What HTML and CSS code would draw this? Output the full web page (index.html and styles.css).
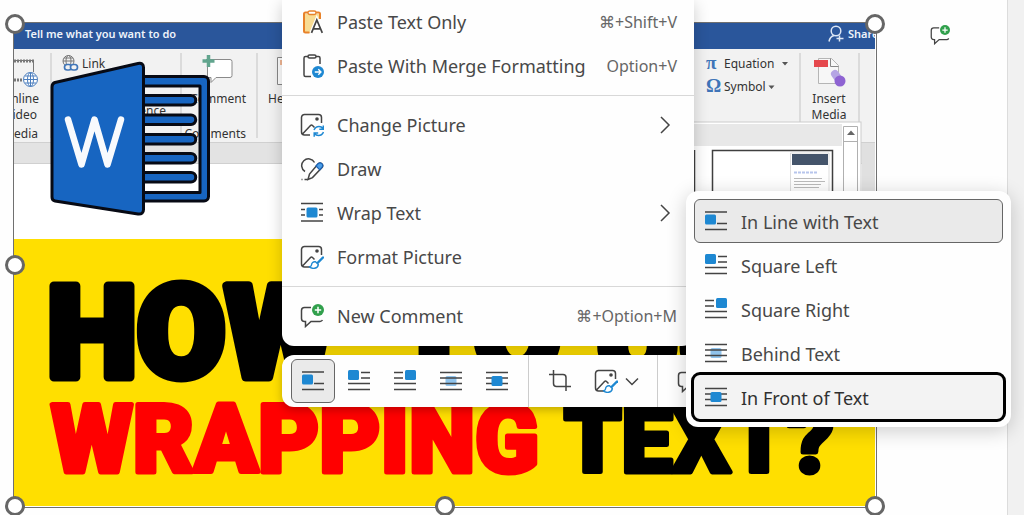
FILE: index.html
```html
<!DOCTYPE html>
<html lang="en">
<head>
<meta charset="utf-8">
<title>Document</title>
<link rel="stylesheet" href="styles.css">
</head>
<body>
<svg class="defs" aria-hidden="true">
  <symbol id="i-inline" viewBox="0 0 24 24"><path class="ln" d="M1 3h22M13 14.5h10M1 20.5h22"/><rect class="sq" x="1" y="5.5" width="11" height="10" rx="1.5"/></symbol>
  <symbol id="i-left" viewBox="0 0 24 24"><path class="ln" d="M14 3.5h9M14 9h9M1 14.5h22M1 20.5h22"/><rect class="sq" x="1" y="1" width="11" height="10" rx="1.5"/></symbol>
  <symbol id="i-right" viewBox="0 0 24 24"><path class="ln" d="M1 3.5h9M1 9h9M1 14.5h22M1 20.5h22"/><rect class="sq" x="12" y="1" width="11" height="10" rx="1.5"/></symbol>
  <symbol id="i-behind" viewBox="0 0 24 24"><rect class="sq pale" x="6.500" y="7" width="11" height="10" rx="1.5"/><path class="ln" d="M1 3.5h22M1 9h22M1 14.5h22M1 20.500h22"/></symbol>
  <symbol id="i-front" viewBox="0 0 24 24"><path class="ln" d="M1 3.5h22M1 9h22M1 14.5h22M1 20.500h22"/><rect class="sq" x="6.500" y="7" width="11" height="10" rx="1.5"/></symbol>
  <symbol id="i-wrap" viewBox="0 0 24 24"><path class="ln" d="M1 2.500h22M1 8.500h4M19 8.500h4M1 14h4M19 14h4M1 20h22"/><rect class="sq" x="6.500" y="6.500" width="11" height="10" rx="1.5"/></symbol>
  <symbol id="i-chev" viewBox="0 0 12 18"><path class="ln" d="M2 1l8 8-8 8"/></symbol>
  <symbol id="i-down" viewBox="0 0 14 9"><path class="ln" d="M1 1.500l6 6 6-6"/></symbol>
  <symbol id="i-comment" viewBox="0 0 24 24"><path class="ln" d="M11 3.500H4.500a3 3 0 0 0-3 3v8a3 3 0 0 0 3 3H5.500v5l5.500-5h9a3 3 0 0 0 2.500-1.500"/><circle cx="18" cy="6" r="6" fill="#31a04c"/><path d="M18 2.800v6.400M14.800 6h6.400" stroke="#fff" stroke-width="1.500"/></symbol>
  <symbol id="i-picture" viewBox="0 0 24 24"><path class="ln" d="M10 22H4.500a3 3 0 0 1-3-3V4.500a3 3 0 0 1 3-3h14a3 3 0 0 1 3 3V10M2.500 21l8-8.500q1-1 2 0l2 2"/><circle cx="17" cy="6" r="1.800" fill="#444"/></symbol>
  <symbol id="i-format" viewBox="0 0 24 24"><use href="#i-picture"/><path d="M23 12.500l-6.500 6.500" stroke="#1e88d2" stroke-width="2.400" stroke-linecap="round"/><path d="M15.500 16.800c-2.500-.4-3.800 1.200-4 3.200-.1 1-.8 1.500-2 1.800 2.500 2.500 8.500 2 8.800-2.200z" fill="#fff" stroke="#1e88d2" stroke-width="1.400" stroke-linejoin="round"/></symbol>
  <symbol id="i-change" viewBox="0 0 24 24"><use href="#i-picture"/><path d="M14 17q1.500-3.500 5-3.500 2.500 0 4 2M23.300 12.500v3.800h-4M23.500 19q-1.500 3.500-5 3.500-2.500 0-4-2M14.200 23.800v-3.900h4" fill="none" stroke="#1e88d2" stroke-width="1.500"/></symbol>
  <symbol id="i-draw" viewBox="0 0 24 24"><path class="ln" d="M5 14.500A6.800 6.800 0 1 1 14.500 5.500M8 22.500l1.500-5.500L18 7q2-1.800 3.800-.200t.2 3.800l-9.500 10zM1.500 22.500h1M4.500 22.500h3.500"/><path d="M16 9l2-2.200q2-1.800 3.800-.2t.2 3.800l-2.200 2.400z" fill="#4d9fe8" stroke="#1b62b5" stroke-width="1.200"/></symbol>
  <symbol id="i-pastetext" viewBox="0 0 24 24"><path d="M5 4h14v5l-4 2-5 12H5z" fill="#f8dc94"/><path d="M8 2.500H5.500a1.500 1.500 0 0 0-1.500 1.500v17a1.500 1.500 0 0 0 1.500 1.500h4M15 2.500h3.500a1.500 1.500 0 0 1 1.500 1.500v5" fill="none" stroke="#e8822a" stroke-width="2"/><rect x="8" y="1" width="8" height="3.500" rx="1.700" fill="#fff" stroke="#e8822a" stroke-width="1.300"/><path d="M11.500 22.800L16.800 10l5.500 12.800M13.300 18.800h7.400" fill="none" stroke="#fff" stroke-width="4"/><path d="M11.500 22.800L16.800 10l5.500 12.800M13.300 18.800h7.400" fill="none" stroke="#444" stroke-width="1.700"/></symbol>
  <symbol id="i-pastemerge" viewBox="0 0 24 24"><path class="ln" d="M8 2.500H5.500A1.500 1.500 0 0 0 4 4v17a1.500 1.500 0 0 0 1.500 1.500H11M16 2.500h2.500A1.500 1.500 0 0 1 20 4v6"/><rect class="ln" x="8" y="1" width="8" height="3" rx="1.500"/><circle cx="18" cy="18" r="6" fill="#1e88d2"/><path d="M14.800 18h6M18.300 15.300L21 18l-2.700 2.700" fill="none" stroke="#fff" stroke-width="1.300"/></symbol>
  <symbol id="i-crop" viewBox="0 0 24 24"><path class="ln" d="M1 5.500h14a3 3 0 0 1 3 3V22M5.500 1v13.500a3 3 0 0 0 3 3H23"/></symbol>
</svg>

<main class="canvas">
  <section class="sheet">
    <figure class="picture">
      <svg class="art" viewBox="14 23 862 484" role="img" aria-label="How to use wrapping text">
        <defs>
          <clipPath id="frame"><rect x="14" y="23" width="861" height="483"/></clipPath>
        </defs>
        <g clip-path="url(#frame)">
          <rect x="13" y="22" width="864" height="27" fill="#2a569b"/>
          <rect x="13" y="49" width="864" height="94" fill="#f2f2f2"/>
          <rect x="13" y="142" width="864" height="21" fill="#e3e3e3"/>
          <path d="M13 142.500h864M13 163.500h864" stroke="#d0d0d0"/>
          <rect x="13" y="239" width="864" height="268" fill="#ffdf00"/>
          <g class="bar-text"><text x="25" y="38">Tell me what you want to do</text><text x="848" y="38">Share</text></g>
          <g fill="none" stroke="#dce6f4" stroke-width="1.500"><circle cx="836" cy="31" r="4.800"/><path d="M829 41.500q1-5 5-6M839.500 35.500v6M836.500 38.500h7"/></g>
          <path d="M51 53v85M181 53v85M257 53v85M800 53v70M859 53v70" stroke="#c4c4c4"/>
          <path d="M10 60.500h23.500V72" fill="none" stroke="#777"/><path d="M14 61h20M14 80h8" stroke="#777" stroke-width="3" stroke-dasharray="2 1"/>
          <g fill="#fff" stroke="#4a7dbd"><circle cx="30.500" cy="79.500" r="7"/><ellipse cx="30.500" cy="79.500" rx="3" ry="7"/><path d="M23.500 79.500h14M25 76h11M25 83h11M30.500 72.500v14"/></g>
          <g fill="none" stroke="#777"><circle cx="68.500" cy="61" r="5.500"/><ellipse cx="68.500" cy="61" rx="2.500" ry="5.500"/><path d="M63 61h11M64 58h9"/></g>
          <g fill="#f2f2f2" stroke="#3f75b8" stroke-width="1.700"><rect x="64.500" y="64.500" width="7" height="5.500" rx="2.700"/><rect x="70.500" y="64.500" width="7" height="5.500" rx="2.700"/></g>
          <path d="M206 59.500h24a2 2 0 0 1 2 2v14a2 2 0 0 1-2 2h-14l-5 5v-5h-3.500V66" fill="#fff" stroke="#8a8a8a"/>
          <path d="M208.500 55v12M202.500 61h12" stroke="#62a58e" stroke-width="3.500"/>
          <path d="M300 57.500h-22.500v27H300" fill="#fff" stroke="#888"/><path d="M280 60h8v5h-8z" fill="#f2b896"/>
          <g class="ribbon-text">
            <text x="82" y="68">Link</text><text x="39" y="103" text-anchor="end">Online</text><text x="37" y="119" text-anchor="end">Video</text><text x="38" y="138" text-anchor="end">Media</text>
            <text x="166" y="115" text-anchor="end">Cross-reference</text><text x="246" y="103" text-anchor="end">Comment</text><text x="246" y="138" text-anchor="end">Comments</text><text x="268" y="103">Header</text>
            <text x="724" y="68">Equation</text><text x="724" y="91">Symbol</text><text x="829" y="103" text-anchor="middle">Insert</text><text x="829" y="119" text-anchor="middle">Media</text>
          </g>
          <g class="sign"><text x="706" y="69">π</text><text x="706" y="92">Ω</text></g>
          <path d="M782 62h6l-3 3.500zM768.500 85.500h6l-3 3.500z" fill="#555"/>
          <path d="M818.500 58.500h13l7 7v18h-20z" fill="#f7f7f7" stroke="#b5b5b5"/><path d="M830.500 58.500v8h8" fill="none" stroke="#888"/>
          <rect x="814" y="60" width="14" height="7" fill="#e5484d"/><path d="M835 74l5 7" stroke="#b5a5e4" stroke-width="8" stroke-linecap="round"/><circle cx="840" cy="81" r="5.500" fill="#8e63d2"/>
          <rect x="680" y="122" width="181" height="90" fill="#fff" stroke="#ccc"/><rect x="680" y="124" width="162" height="22" fill="#e8e8e8"/>
          <rect x="862" y="143" width="14" height="60" fill="#e0e0e0"/>
          <path d="M843.500 126.500h14v80h-14zM843.500 141.500h14" fill="#fff" stroke="#b0b0b0"/><path d="M847 135h8l-4-4.500z" fill="#666"/>
          <path d="M694.500 150v50M712.500 205v-54.500h120V205" fill="none" stroke="#3f3f3f" stroke-width="1.500"/>
          <path d="M790.500 205v-52h38.500v52" fill="#fff" stroke="#ddd"/><rect x="792" y="154" width="36" height="11" fill="#44546a"/>
          <path d="M794 172.500h23" stroke="#b7c5ec" stroke-width="2" stroke-dasharray="3 1"/><path d="M794 178.500h28M794 181.500h31M794 184.500h27M794 187.500h25" stroke="#bbb"/>

          <g fill="#1765c1" stroke="#070a14" stroke-width="3" stroke-linejoin="round">
            <path fill-rule="evenodd" d="M143 76.500h61a4.500 4.500 0 0 1 4.500 4.500v115.500a4.500 4.500 0 0 1-4.500 4.500h-61zM143 86v106.500h57V86z"/>
            <path d="M143 95.500h48a4.700 4.700 0 0 1 0 9.500h-48zM143 115h48a4.700 4.700 0 0 1 0 9.500h-48zM143 134.500h48a4.700 4.700 0 0 1 0 9.500h-48zM143 153.500h48a4.700 4.700 0 0 1 0 9.500h-48zM143 172.500h48a4.700 4.700 0 0 1 0 9.500h-48z"/>
            <path d="M55 82.500l83-19q5.500-1 5.500 4v142q0 5-5.500 4.500l-83-13q-3-.500-3-4V87q0-3.500 3-4.500z"/>
          </g>
          <path d="M68 119.500l13.500 45 13-45 13 45 13.500-45" fill="none" stroke="#f8fafd" stroke-width="6.500" stroke-linecap="round" stroke-linejoin="round"/>

          <g class="headline">
            <text x="47" y="377">HOW</text><text x="394" y="377">TO</text><text x="595" y="377">USE</text>
          </g>
          <text class="subline red" x="51" y="472">WRAPPING</text><text class="subline" x="564" y="472">TEXT?</text>
        </g>
      </svg>
      <span class="handle tl"></span><span class="handle tr"></span><span class="handle ml"></span>
      <span class="handle bl"></span><span class="handle bm"></span><span class="handle br"></span>
    </figure>
    <button class="add-comment" aria-label="Add comment"><svg><use href="#i-comment"/></svg></button>
  </section>

  <nav class="menu context" aria-label="Picture menu">
    <button class="item"><svg><use href="#i-pastetext"/></svg><span>Paste Text Only</span><kbd>⌘+Shift+V</kbd></button>
    <button class="item"><svg><use href="#i-pastemerge"/></svg><span>Paste With Merge Formatting</span><kbd>Option+V</kbd></button>
    <hr>
    <button class="item"><svg><use href="#i-change"/></svg><span>Change Picture</span><svg class="chev"><use href="#i-chev"/></svg></button>
    <button class="item"><svg><use href="#i-draw"/></svg><span>Draw</span></button>
    <button class="item"><svg><use href="#i-wrap"/></svg><span>Wrap Text</span><svg class="chev"><use href="#i-chev"/></svg></button>
    <button class="item"><svg><use href="#i-format"/></svg><span>Format Picture</span></button>
    <hr>
    <button class="item"><svg><use href="#i-comment"/></svg><span>New Comment</span><kbd>⌘+Option+M</kbd></button>
  </nav>

  <div class="toolbar" role="toolbar" aria-label="Picture tools">
    <div class="group">
      <button class="tool on" aria-label="In Line with Text"><svg><use href="#i-inline"/></svg></button>
      <button class="tool" aria-label="Square Left"><svg><use href="#i-left"/></svg></button>
      <button class="tool" aria-label="Square Right"><svg><use href="#i-right"/></svg></button>
      <button class="tool" aria-label="Behind Text"><svg><use href="#i-behind"/></svg></button>
      <button class="tool" aria-label="In Front of Text"><svg><use href="#i-front"/></svg></button>
    </div>
    <div class="group">
      <button class="tool" aria-label="Crop"><svg><use href="#i-crop"/></svg></button>
      <button class="tool split" aria-label="Format Picture"><svg><use href="#i-format"/></svg><svg class="down"><use href="#i-down"/></svg></button>
    </div>
    <div class="group">
      <button class="tool" aria-label="New Comment"><svg><use href="#i-comment"/></svg></button>
    </div>
  </div>

  <nav class="menu submenu" aria-label="Wrap Text">
    <button class="item on"><svg><use href="#i-inline"/></svg><span>In Line with Text</span></button>
    <button class="item"><svg><use href="#i-left"/></svg><span>Square Left</span></button>
    <button class="item"><svg><use href="#i-right"/></svg><span>Square Right</span></button>
    <button class="item"><svg><use href="#i-behind"/></svg><span>Behind Text</span></button>
    <button class="item focus"><svg><use href="#i-front"/></svg><span>In Front of Text</span></button>
  </nav>
</main>
</body>
</html>
```

FILE: styles.css
```css
* { box-sizing: border-box; }
html, body { height: 100%; }
body {
  margin: 0;
  overflow: hidden;
  background: #f1f1f1;
  color: #484848;
  font-family: "Noto Sans", "Open Sans", sans-serif;
  font-size: 18px;
}
button {
  margin: 0;
  padding: 0;
  border: 1px solid transparent;
  background: none;
  color: inherit;
  font: inherit;
}
.defs { position: absolute; width: 0; height: 0; }
.ln { fill: none; stroke: #444; stroke-width: 1.5; }
.sq { fill: #1e88d2; }
.sq.pale { fill: #8fc3ec; }

.canvas { position: relative; min-height: 100%; padding-right: 16px; overflow: hidden; }
.sheet {
  display: flex;
  align-items: flex-start;
  gap: 52px;
  min-height: 515px;
  padding: 22px 0 0 13px;
  background: #fefefe;
  border-right: 1px solid #dcdcdc;
}
.picture { position: relative; flex: 0 0 864px; margin: 0; border: 1px solid #707070; background: #fff; }
.art { display: block; width: 100%; }
.handle {
  position: absolute;
  width: 20px;
  height: 20px;
  border: 3px solid #666;
  border-radius: 50%;
  background: #fff;
  transform: translate(-50%, -50%);
}
.tl, .ml, .bl { left: 1px; }
.tr, .br { left: calc(100% - 1px); }
.bm { left: 50%; }
.tl, .tr { top: 1px; }
.ml { top: 50%; }
.bl, .bm, .br { top: calc(100% - 1px); }
.add-comment { display: flex; margin-top: 2px; }
.add-comment svg { width: 20px; height: 20px; }

.bar-text { font-size: 11px; fill: #eef3fa; font-weight: 600; }
.ribbon-text { font-size: 12px; fill: #333; }
.sign { font: bold 19px "Liberation Serif", serif; fill: #3f75b8; }
.headline, .subline { font-family: Roboto, sans-serif; font-weight: 900; fill: #000; stroke: #000; stroke-linejoin: round; }
.headline { font-size: 128px; stroke-width: 9px; }
.subline { font-size: 91px; stroke-width: 5px; }
.subline.red { font-size: 94px; fill: #f00; stroke: #f00; }

.menu { position: absolute; background: #fefefe; display: flex; flex-direction: column; }
.context {
  left: 282px;
  top: 0;
  width: 412px;
  padding-bottom: 8px;
  border-radius: 0 0 12px 12px;
  box-shadow: 0 4px 16px rgba(0, 0, 0, .2);
}
.item { display: flex; align-items: center; gap: 13px; height: 44px; padding: 0 9px; border-radius: 6px; text-align: left; white-space: nowrap; }
.item span { flex: 1; }
.item svg { width: 24px; height: 24px; flex: none; }
.item .chev { width: 12px; height: 18px; margin-right: 6px; }
.context .item { padding: 0 16px 0 17px; }
kbd { font: inherit; font-size: 16px; color: #666; }
hr { width: 100%; height: 1px; margin: 7px 0; border: 0; background: #d8d8d8; }

.toolbar {
  position: absolute;
  left: 282px;
  top: 355px;
  display: flex;
  background: #fefefe;
  border-radius: 12px;
  box-shadow: 0 3px 10px rgba(0, 0, 0, .25);
}
.group { display: flex; gap: 2px; padding: 4px 9px; }
.group + .group { border-left: 1px solid #ccc; }
.tool { display: flex; align-items: center; justify-content: center; gap: 7px; width: 44px; height: 44px; border-radius: 6px; }
.tool svg { width: 24px; height: 24px; }
.tool.split { width: 64px; }
.tool .down { width: 14px; height: 9px; }
.on { background: #eaeaea; border-color: #666; }

.submenu {
  left: 686px;
  top: 191px;
  width: 325px;
  padding: 8px;
  border-radius: 12px;
  box-shadow: 0 4px 20px rgba(0, 0, 0, .2);
}
.submenu span { padding-top: 1px; }
.focus { outline: 3px solid #000; background: #f3f3f3; color: #303030; }
```
